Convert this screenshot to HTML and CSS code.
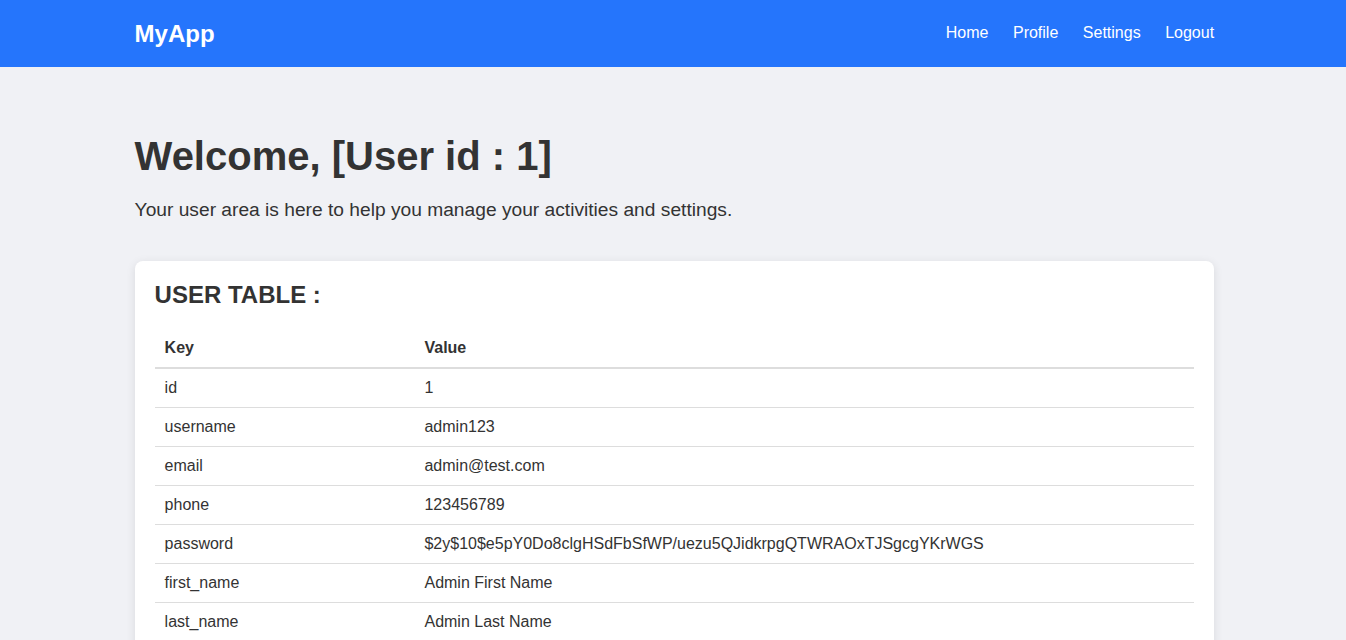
FILE: index.html
```html
<!DOCTYPE html>
<html lang="en">
<head>
<meta charset="utf-8">
<title>MyApp</title>
<link rel="stylesheet" href="styles.css">
</head>
<body>
<header class="navbar">
  <div class="nav-inner">
    <div class="logo">MyApp</div>
    <nav class="links">
      <a href="#">Home</a>
      <a href="#">Profile</a>
      <a href="#">Settings</a>
      <a href="#">Logout</a>
    </nav>
  </div>
</header>
<main class="container">
  <h1 class="welcome">Welcome, [User id : 1]</h1>
  <p class="intro">Your user area is here to help you manage your activities and settings.</p>
  <section class="card">
    <h2 class="card-title">USER TABLE :</h2>
    <table class="user-table">
      <thead>
        <tr><th class="key-col">Key</th><th>Value</th></tr>
      </thead>
      <tbody>
        <tr><td>id</td><td>1</td></tr>
        <tr><td>username</td><td>admin123</td></tr>
        <tr><td>email</td><td>admin@test.com</td></tr>
        <tr><td>phone</td><td>123456789</td></tr>
        <tr><td>password</td><td>$2y$10$e5pY0Do8clgHSdFbSfWP/uezu5QJidkrpgQTWRAOxTJSgcgYKrWGS</td></tr>
        <tr><td>first_name</td><td>Admin First Name</td></tr>
        <tr><td>last_name</td><td>Admin Last Name</td></tr>
      </tbody>
    </table>
  </section>
</main>
</body>
</html>
```

FILE: styles.css
```css
* { box-sizing: border-box; }
body {
  margin: 0;
  font-family: "Liberation Sans", Arial, sans-serif;
  background: #f0f1f5;
  color: #333;
}
.navbar {
  background: #2575fc;
  padding: 20px 0;
}
.nav-inner {
  width: 80.2%;
  margin-left: 10%;
  display: flex;
  justify-content: space-between;
  align-items: center;
}
.logo {
  color: #fff;
  font-size: 24px;
  line-height: 27px;
  font-weight: bold;
}
.links {
  display: flex;
  gap: 24.5px;
  margin-bottom: 1px;
}
.links a {
  color: #fff;
  text-decoration: none;
  font-size: 16px;
}
.container {
  width: 80.2%;
  margin-left: 10%;
  padding-top: 67px;
}
.welcome {
  font-size: 40px;
  margin: 0 0 20px;
}
.intro {
  font-size: 19.2px;
  margin: 0 0 40px;
}
.card {
  background: #fff;
  border-radius: 8px;
  padding: 20px;
  box-shadow: 0 2px 10px rgba(0, 0, 0, 0.1);
}
.card-title {
  font-size: 24px;
  margin: 0 0 20px;
}
.user-table {
  width: 100%;
  border-collapse: collapse;
  font-size: 16px;
}
.user-table th,
.user-table td {
  text-align: left;
  padding: 10px;
  border-bottom: 1px solid #ddd;
}
.user-table th {
  font-weight: bold;
  border-bottom: 2px solid #ddd;
}
.key-col { width: 25%; }
```
